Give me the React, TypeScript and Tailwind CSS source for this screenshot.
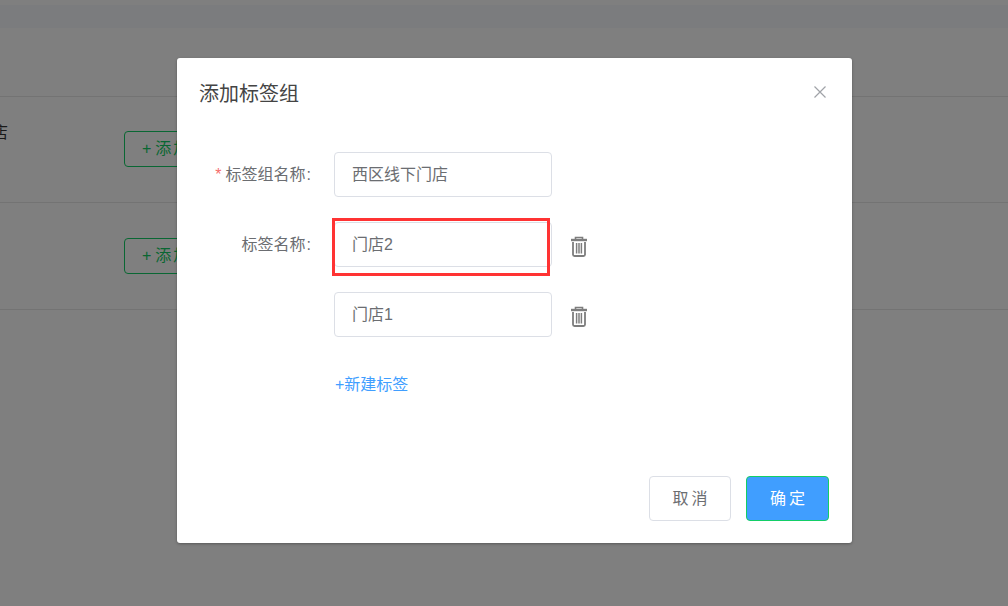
import React from "react";

const font = { fontFamily: '"Liberation Sans", "Noto Sans CJK SC", sans-serif' };

function TagInput({ value }: { value: string }) {
  return (
    <div className="flex h-[45px] w-[218px] items-center rounded-[4px] border border-[#dcdfe6] bg-white pl-[17px] pt-[1px] text-base text-[#6b6d71]">
      {value}
    </div>
  );
}

function FormRow({ label, required, children }: { label?: string; required?: boolean; children: React.ReactNode }) {
  return (
    <div className="flex items-start">
      <div className="flex h-[45px] w-[134px] items-center justify-end text-base text-[#6b6d71]">
        {required && <span className="mr-[4px] text-[#f56c6c]">*</span>}
        {label}
        {label && <span className="ml-[1px]">:</span>}
      </div>
      <div className="ml-[23px] flex items-center">{children}</div>
    </div>
  );
}

function TrashBtn() {
  return (
    <button className="ml-[18px] mt-[3px]">
      <svg width="18" height="21" viewBox="0 0 18 21" fill="none" stroke="#7d7d7d">
        <path d="M5.5 3.5V1.5h7v2" strokeWidth="1.6" />
        <path d="M1 4h16" strokeWidth="2.4" />
        <path d="M3 6v12.5a1.5 1.5 0 0 0 1.5 1.5h9a1.5 1.5 0 0 0 1.5-1.5V6" strokeWidth="1.8" />
        <path d="M6.6 7v10.5M9 7v10.5M11.4 7v10.5" strokeWidth="1.5" />
      </svg>
    </button>
  );
}

export default function App() {
  return (
    <div className="relative h-[606px] w-[1008px] overflow-hidden bg-white" style={font}>
      <div className="mt-[5px] h-[23px] bg-[#f6f8fc]" />
      <div className="h-[69px] border-b border-[#e6e6e6]" />
      <div className="relative h-[106px] border-b border-[#e6e6e6] pl-[124px] pt-[34px]">
        <span className="absolute left-[-8px] top-[24px] text-base leading-6 text-[#333]">店</span>
        <button className="h-[36px] w-[120px] rounded border border-[#13ce66] bg-white pl-[17px] text-left text-base text-[#13ce66]">
          <span className="mr-[4px]">+</span>
          <span className="tracking-[2px]">添加</span>
        </button>
      </div>
      <div className="h-[107px] border-b border-[#e6e6e6] pl-[124px] pt-[35px]">
        <button className="h-[36px] w-[120px] rounded border border-[#13ce66] bg-white pl-[17px] text-left text-base text-[#13ce66]">
          <span className="mr-[4px]">+</span>
          <span className="tracking-[2px]">添加</span>
        </button>
      </div>

      <div className="absolute inset-0 bg-black/50" />

      <div className="absolute left-[177px] top-[58px] flex h-[485px] w-[675px] flex-col rounded-[3px] bg-white shadow-[0_1px_3px_rgba(0,0,0,0.3)]">
        <div className="flex items-center justify-between pl-[22px] pr-[25px] pt-[21px]">
          <h2 className="text-[20px] leading-[30px] text-[#444]">添加标签组</h2>
          <svg className="mb-[4px]" width="14" height="14" viewBox="0 0 14 14" fill="none" stroke="#a0a3a8" strokeWidth="1.2">
            <path d="M1.5 1.5l11 11M12.5 1.5l-11 11" />
          </svg>
        </div>

        <div className="mt-[43px] flex flex-col gap-[25px]">
          <FormRow label="标签组名称" required>
            <TagInput value="西区线下门店" />
          </FormRow>
          <FormRow label="标签名称">
            <div className="relative">
              <TagInput value="门店2" />
              <div className="absolute left-[-2px] top-[-4px] h-[58px] w-[218px] border-[3px] border-[#f33]" />
            </div>
            <TrashBtn />
          </FormRow>
          <FormRow>
            <TagInput value="门店1" />
            <TrashBtn />
          </FormRow>
        </div>

        <a className="ml-[158px] mt-[37px] text-base leading-[22px] text-[#409eff]">+新建标签</a>

        <div className="mt-auto flex justify-end gap-[15px] pb-[22px] pr-[23px]">
          <button className="h-[45px] w-[82px] rounded-[4px] border border-[#dcdfe6] bg-white pl-[3px] text-base tracking-[3px] text-[#6b6d71]">
            取消
          </button>
          <button className="h-[45px] w-[83px] rounded-[4px] border border-[#13ce66] bg-[#409eff] pl-[3px] text-base tracking-[3px] text-white">
            确定
          </button>
        </div>
      </div>
    </div>
  );
}
